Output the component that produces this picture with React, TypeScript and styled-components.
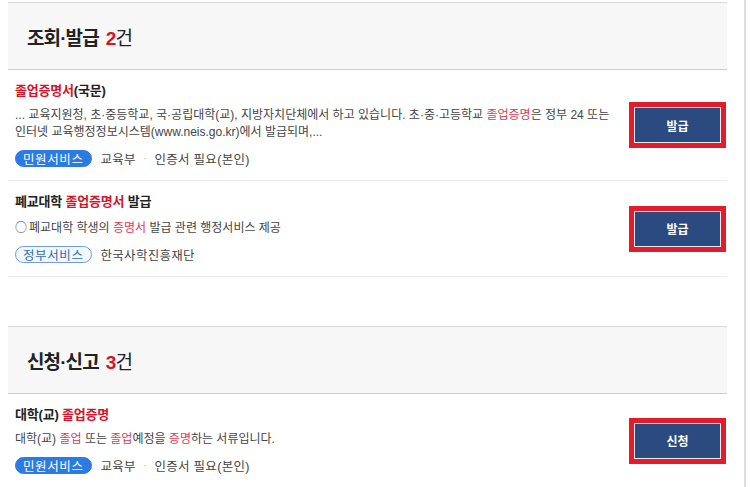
import React from "react";
import styled, { createGlobalStyle } from "styled-components";

const GlobalStyle = createGlobalStyle`
  html, body {
    margin: 0;
    padding: 0;
    background: #fff;
  }
  body {
    font-family: "Liberation Sans", "Noto Sans CJK KR", sans-serif;
    color: #333;
  }
`;

const Page = styled.div`
  width: 746px;
  height: 487px;
  box-sizing: border-box;
  padding: 2px 17px 0 8px;
  border-right: 2px solid #dedede;
  overflow: hidden;
`;

const Section = styled.section`
  & + & {
    margin-top: 49px;
  }
`;

const SectionHead = styled.div`
  height: 66px;
  display: flex;
  align-items: center;
  padding-left: 19px;
  background: #f7f7f7;
  border-top: 1px solid #d9d9d9;
  border-bottom: 1px solid #cdcdcd;
`;

const SectionTitle = styled.h2`
  margin: 0;
  font-size: 19px;
  font-weight: 700;
  letter-spacing: -0.9px;
  color: #222;
`;

const Count = styled.span`
  margin-left: 7px;
  font-weight: 400;
  b {
    color: #d3142d;
    font-weight: 700;
  }
`;

const Item = styled.div`
  display: flex;
  align-items: center;
  padding: 12px 1px 12px 7px;
  border-bottom: 1px solid #ececec;
`;

const Body = styled.div`
  flex: 1;
  min-width: 0;
`;

const ItemTitle = styled.div`
  font-size: 13px;
  line-height: 18px;
  font-weight: 700;
  letter-spacing: -0.2px;
  color: #222;
  em {
    font-style: normal;
    color: #d3142d;
  }
`;

const Desc = styled.p`
  margin: 7px 0 0;
  font-size: 12px;
  line-height: 17px;
  letter-spacing: 0;
  white-space: nowrap;
  color: #444;
  em {
    font-style: normal;
    color: #dd3a55;
  }
`;

const Bullet = styled.span`
  font-family: "Noto Sans CJK KR", sans-serif;
  font-size: 12px;
  margin-right: 2px;
`;

const Meta = styled.div`
  margin-top: 7px;
  display: flex;
  align-items: center;
  height: 20px;
  font-size: 12.5px;
  letter-spacing: 0.3px;
  color: #444;
`;

const Pill = styled.span<{ $outline?: boolean }>`
  display: inline-flex;
  align-items: center;
  height: 17px;
  padding: 0 7px;
  border-radius: 9px;
  font-size: 12.5px;
  letter-spacing: 0.6px;
  margin-right: 9px;
  box-sizing: border-box;
  background: ${(p) => (p.$outline ? "#f3f8fd" : "#2c7be3")};
  color: ${(p) => (p.$outline ? "#2f6db6" : "#fff")};
  border: 1px solid ${(p) => (p.$outline ? "#6f9fd6" : "#2c7be3")};
`;

const Dot = styled.span`
  margin: 0 7px;
  color: #c4c4c4;
`;

const Mark = styled.div`
  flex: none;
  margin-left: 16px;
  padding: 5px;
  background: #e31b2b;
`;

const ActionButton = styled.button`
  display: block;
  width: 87px;
  height: 36px;
  box-sizing: border-box;
  border: 1px solid #e9ecf2;
  background: #2b4a80;
  color: #fff;
  font-family: "Noto Sans CJK KR", sans-serif;
  font-size: 12px;
  font-weight: 700;
  cursor: pointer;
`;

type Result = {
  title: React.ReactNode;
  desc: React.ReactNode;
  tag: string;
  outline?: boolean;
  meta: string[];
  action: string;
};

const issue: Result[] = [
  {
    title: (
      <>
        <em>졸업증명서</em>(국문)
      </>
    ),
    desc: (
      <>
        ... 교육지원청, 초·중등학교, 국·공립대학(교), 지방자치단체에서 하고 있습니다. 초·중·고등학교{" "}
        <em>졸업증명</em>은 정부 24 또는
        <br />
        인터넷 교육행정정보시스템(www.neis.go.kr)에서 발급되며,...
      </>
    ),
    tag: "민원서비스",
    meta: ["교육부", "인증서 필요(본인)"],
    action: "발급",
  },
  {
    title: (
      <>
        폐교대학 <em>졸업증명서</em> 발급
      </>
    ),
    desc: (
      <>
        <Bullet>○</Bullet>폐교대학 학생의 <em>증명서</em> 발급 관련 행정서비스 제공
      </>
    ),
    tag: "정부서비스",
    outline: true,
    meta: ["한국사학진흥재단"],
    action: "발급",
  },
];

const apply: Result[] = [
  {
    title: (
      <>
        대학(교) <em>졸업증명</em>
      </>
    ),
    desc: (
      <>
        대학(교) <em>졸업</em> 또는 <em>졸업</em>예정을 <em>증명</em>하는 서류입니다.
      </>
    ),
    tag: "민원서비스",
    meta: ["교육부", "인증서 필요(본인)"],
    action: "신청",
  },
];

const ResultRow = ({ r }: { r: Result }) => (
  <Item>
    <Body>
      <ItemTitle>{r.title}</ItemTitle>
      <Desc>{r.desc}</Desc>
      <Meta>
        <Pill $outline={r.outline}>{r.tag}</Pill>
        {r.meta.map((m, i) => (
          <React.Fragment key={m}>
            {i > 0 && <Dot>·</Dot>}
            <span>{m}</span>
          </React.Fragment>
        ))}
      </Meta>
    </Body>
    <Mark>
      <ActionButton>{r.action}</ActionButton>
    </Mark>
  </Item>
);

const App = () => {
  return (
    <>
      <GlobalStyle />
      <Page>
        <Section>
          <SectionHead>
            <SectionTitle>
              조회·발급
              <Count>
                <b>2</b>건
              </Count>
            </SectionTitle>
          </SectionHead>
          {issue.map((r, i) => (
            <ResultRow key={i} r={r} />
          ))}
        </Section>
        <Section>
          <SectionHead>
            <SectionTitle>
              신청·신고
              <Count>
                <b>3</b>건
              </Count>
            </SectionTitle>
          </SectionHead>
          {apply.map((r, i) => (
            <ResultRow key={i} r={r} />
          ))}
        </Section>
      </Page>
    </>
  );
};

export default App;
